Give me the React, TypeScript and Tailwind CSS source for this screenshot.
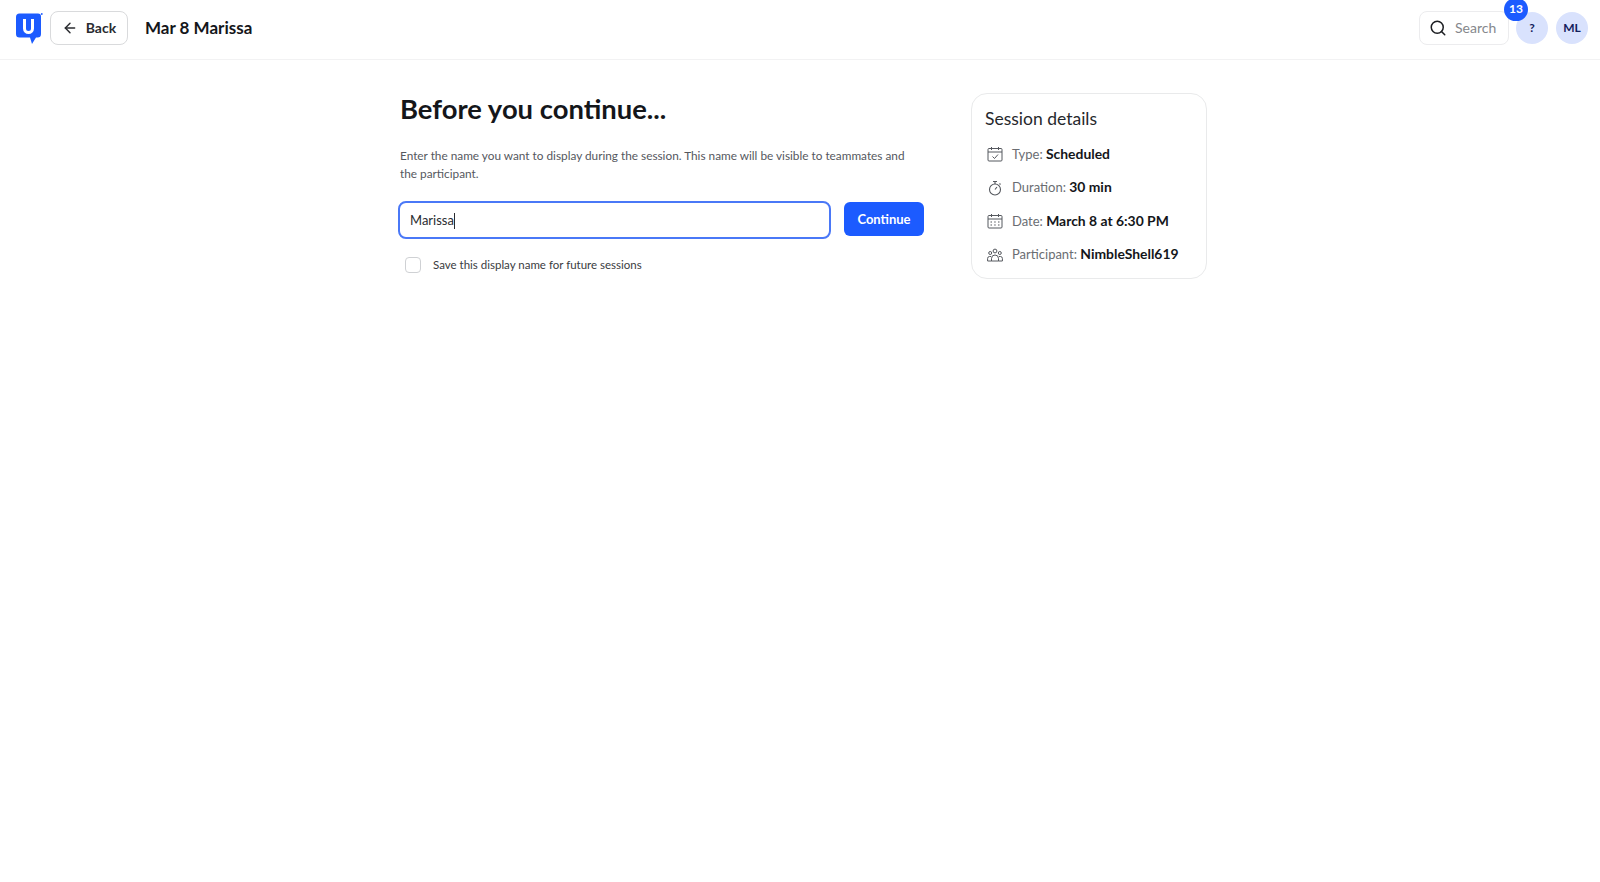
import { ArrowLeft, Search } from 'lucide-react';

const Logo = () => (
  <svg width="27" height="32" viewBox="0 0 27 32" className="mt-[3px] shrink-0">
    <path d="M3.5 0.5H22a3 3 0 0 1 3 3V21a3.5 3.5 0 0 1-3.5 3.5H20L16 31L14 24.5H3.5A3.5 3.5 0 0 1 0 21V4A3.5 3.5 0 0 1 3.5 0.5Z" fill="#1c5bff" />
    <path d="M8.5 6V15.5a4 4 0 0 0 8 0V6" fill="none" stroke="#fff" strokeWidth="3" />
    <circle cx="25.8" cy="1" r="0.9" fill="#1c5bff" />
  </svg>
);

const ScheduledIcon = () => (
  <svg width="16" height="16" viewBox="0 0 16 16" fill="none" stroke="#55585e" strokeWidth="1">
    <rect x="1" y="2.5" width="14" height="12.5" rx="1" />
    <path d="M1 6h14M4.5 1v3M11.5 1v3M5.5 10.5l2 2 3.5-4" />
  </svg>
);

const TimerIcon = () => (
  <svg width="16" height="16" viewBox="0 0 16 16" fill="none" stroke="#55585e" strokeWidth="1.1">
    <circle cx="8" cy="9.5" r="5.5" />
    <path d="M6 1.5h4M8 1.5V4M8 9.5l2-2.5M12.5 3.5l1 1" />
  </svg>
);

const CalendarIcon = () => (
  <svg width="16" height="16" viewBox="0 0 16 16" fill="none" stroke="#55585e" strokeWidth="1">
    <rect x="1" y="2.5" width="14" height="12.5" rx="1" />
    <path d="M1 6h14M4.5 1v3M11.5 1v3" />
    <path d="M3.5 9h1.5M7.2 9h1.5M11 9h1.5M3.5 12h1.5M7.2 12h1.5M11 12h1.5" strokeWidth="1.2" />
  </svg>
);

const PeopleIcon = () => (
  <svg width="16" height="16" viewBox="0 0 16 16" fill="none" stroke="#55585e" strokeWidth="1">
    <circle cx="8" cy="4" r="1.9" />
    <circle cx="3.2" cy="6" r="1.5" />
    <circle cx="12.8" cy="6" r="1.5" />
    <path d="M4.5 14v-2.5a3.5 3.5 0 0 1 7 0V14ZM4 9.5H2.5A2 2 0 0 0 .6 11.5V14h3.9M12 9.5h1.5a2 2 0 0 1 1.9 2V14h-3.9" />
  </svg>
);

const details = [
  { icon: <ScheduledIcon />, label: 'Type:', value: 'Scheduled' },
  { icon: <TimerIcon />, label: 'Duration:', value: '30 min' },
  { icon: <CalendarIcon />, label: 'Date:', value: 'March 8 at 6:30 PM' },
  { icon: <PeopleIcon />, label: 'Participant:', value: 'NimbleShell619' },
];

const App = () => {
  return (
    <div className="min-h-[882px] bg-white font-['Lato','Liberation_Sans',sans-serif] text-[#14161a]">
      <header className="flex h-[60px] items-center border-b border-[#f2f2f3] pb-[4px] pl-4 pr-3">
        <Logo />
        <button className="ml-[7px] flex h-[34px] w-[78px] items-center justify-center gap-2 rounded-lg border border-[#d9dadc] text-sm font-bold text-[#2a2c30]">
          <ArrowLeft className="h-4 w-4" strokeWidth={2.2} />
          Back
        </button>
        <h1 className="ml-[17px] text-[17px] font-bold">Mar 8 Marissa</h1>
        <div className="ml-auto flex items-center">
          <div className="flex h-[34px] w-[90px] items-center gap-[8px] rounded-lg border border-[#ececee] pl-[9px] text-sm text-[#85878c]">
            <Search className="h-[18px] w-[18px] text-[#1c1e22]" strokeWidth={2} />
            Search
          </div>
          <div className="relative ml-[7px] flex h-8 w-8 items-center justify-center rounded-full bg-[#d9e2fd] text-xs font-bold text-[#14205c]">
            ?
            <span className="absolute -top-[14px] -left-[12px] flex h-[23px] w-[24px] items-center justify-center rounded-full bg-[#1c5bff] text-xs font-bold text-white">
              13
            </span>
          </div>
          <div className="ml-2 flex h-8 w-8 items-center justify-center rounded-full bg-[#d9e2fd] text-xs font-bold text-[#14205c]">
            ML
          </div>
        </div>
      </header>

      <main className="flex items-start pl-[398px] pt-[33px]">
        <section className="w-[526px]">
          <h2 className="pl-[2px] -mt-[1px] text-[27.4px] leading-[34px] font-bold text-[#14161a]">Before you continue...</h2>
          <p className="mt-[21px] w-[515px] pl-[2px] text-[11.8px] leading-[17.5px] text-[#55585e]">
            Enter the name you want to display during the session. This name will be visible to teammates and the participant.
          </p>
          <div className="mt-[19px] flex items-start gap-3">
            <div className="flex h-[38px] w-[433px] items-center rounded-lg border-2 border-[#4a78f7] pl-[10px] pt-[2px] text-[13px] text-[#2a2c30]">
              Marissa
              <span className="h-4 w-px bg-[#2a2c30]" />
            </div>
            <button className="mt-px ml-px h-[34px] w-[80px] rounded-md bg-[#1c5bff] pt-[1px] text-[13px] font-bold text-white">Continue</button>
          </div>
          <label className="mt-[17px] ml-[7px] flex items-center gap-3 text-[11.5px] text-[#3a3c41]">
            <input type="checkbox" className="h-4 w-4 appearance-none rounded border border-[#cfd1d4] bg-white" />
            Save this display name for future sessions
          </label>
        </section>
        <aside className="ml-[47px] h-[186px] w-[236px] rounded-2xl border border-[#e9eaeb] px-[13px] pt-[14px]">
          <h3 className="text-[17.5px] leading-[22px] text-[#26282c]">Session details</h3>
          <ul className="mt-[15px] flex flex-col gap-[15px]">
            {details.map((d) => (
              <li key={d.label} className="flex h-[18.5px] items-center gap-[9px] pl-[2px] text-[13px]">
                {d.icon}
                <span className="text-[#6a6d72]">
                  {d.label} <b className="text-[13.9px] font-bold text-[#14161a]">{d.value}</b>
                </span>
              </li>
            ))}
          </ul>
        </aside>
      </main>
    </div>
  );
};

export default App;
